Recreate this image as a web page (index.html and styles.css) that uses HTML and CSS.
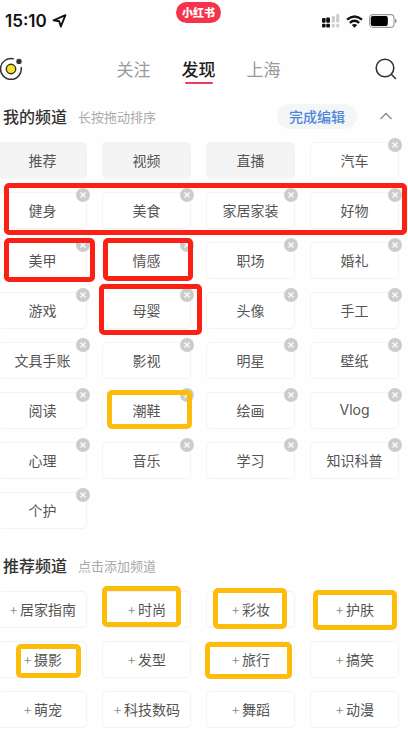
FILE: index.html
```html
<!DOCTYPE html>
<html lang="zh-CN">
<head>
  <meta charset="UTF-8" />
  <meta name="viewport" content="width=device-width, initial-scale=1.0"/>
  <title>我的频道</title>
  <link rel="stylesheet" href="styles.css">
</head>
<body>
<div class="status-bar">
  <div class="clock">
    <span>15:10</span>
    <svg width="15" height="14" viewBox="0 0 15 14"><path d="M13.4 1.2 8.8 12.6 7.2 7.3 1.6 6.3Z" fill="none" stroke="#111" stroke-width="1.9" stroke-linejoin="round"/></svg>
  </div>
  <div class="app-pill">小红书</div>
  <div class="status-icons">
    <svg width="18" height="14" viewBox="0 0 18 14">
      <g fill="#111"><rect x="0" y="4" width="3.6" height="4.7" rx="1"/><rect x="4.2" y="3.4" width="3.8" height="5.3" rx="1"/><rect x="0" y="9.8" width="3.6" height="3.8" rx="1"/><rect x="4.2" y="9.8" width="3.8" height="3.8" rx="1"/></g>
      <g fill="#ccc"><rect x="9.8" y="2" width="3" height="6.5" rx="1"/><rect x="14.2" y="0" width="3" height="8.5" rx="1"/><rect x="9.8" y="10" width="3" height="3.5" rx="1"/><rect x="14.2" y="10" width="3" height="3.5" rx="1"/></g>
    </svg>
    <svg width="17" height="13" viewBox="0 0 17 13">
      <g fill="none" stroke="#111" stroke-width="2.4"><path d="M1 4.7Q8.5-1.7 16 4.7"/><path d="M3.8 7.8Q8.5 3.9 13.2 7.8"/></g>
      <path d="M5.8 10Q8.5 7.9 11.2 10L8.5 12.8Z" fill="#111"/>
    </svg>
    <svg width="28" height="14" viewBox="0 0 28 14">
      <rect x=".6" y=".6" width="24.4" height="12.8" rx="3.4" fill="#fff" stroke="#999" stroke-width="1.1"/>
      <rect x="1.8" y="1.9" width="17" height="10.2" rx="2" fill="#000"/>
      <path d="M26.2 4.8v4.4Q27.6 8.6 27.6 7T26.2 4.8Z" fill="#777"/>
    </svg>
  </div>
</div>

<header class="nav">
  <button class="icon-btn" aria-label="直播">
    <svg width="23" height="24" viewBox="0 0 23 24">
      <path d="M13.2 1.8A10.4 10.4 0 1 0 21.2 10.5" fill="none" stroke="#333" stroke-width="1.5" stroke-linecap="round"/>
      <circle cx="11" cy="12" r="4.7" fill="#f8e71c" stroke="#333" stroke-width="1.4"/>
      <circle cx="19" cy="4.4" r="2.7" fill="#333"/>
    </svg>
  </button>
  <nav class="tabs">
    <a href="#">关注</a>
    <a href="#" class="active">发现</a>
    <a href="#">上海</a>
  </nav>
  <button class="icon-btn search" aria-label="搜索">
    <svg width="22" height="22" viewBox="0 0 22 22"><g fill="none" stroke="#333" stroke-width="1.6" stroke-linecap="round"><circle cx="10" cy="10" r="8.8"/><path d="m16.3 16.3 4.2 4.2"/></g></svg>
  </button>
</header>

<main>
  <section>
    <div class="section-head">
      <h2>我的频道</h2>
      <span class="hint">长按拖动排序</span>
      <button class="edit-btn">完成编辑</button>
      <button class="icon-btn" aria-label="收起">
        <svg width="14" height="8" viewBox="0 0 14 8"><path d="M1.5 7 7 1.5 12.5 7" fill="none" stroke="#888" stroke-width="1.3"/></svg>
      </button>
    </div>
    <div class="channels" id="mine"></div>
  </section>

  <section class="recommend">
    <div class="section-head">
      <h2>推荐频道</h2>
      <span class="hint">点击添加频道</span>
    </div>
    <div class="channels" id="more"></div>
  </section>
</main>

<!-- highlighted channels -->
<div class="mark red row-2"></div>
<div class="mark red nails"></div>
<div class="mark red emotion"></div>
<div class="mark red baby"></div>
<div class="mark yellow shoes"></div>
<div class="mark yellow fashion"></div>
<div class="mark yellow makeup"></div>
<div class="mark yellow skincare"></div>
<div class="mark yellow photo"></div>
<div class="mark yellow travel"></div>

<script src="script.js"></script>
</body>
</html>
```

FILE: styles.css
```css
* { margin: 0; padding: 0; box-sizing: border-box; }
body {
  position: relative; min-height: 100vh; overflow-x: hidden;
  background: #fefefe; color: #333;
  font-family: "Noto Sans CJK SC", sans-serif;
}
button {
  font-family: inherit; border: none; background: none; cursor: pointer;
}
a { color: inherit; text-decoration: none; }
svg { display: block; }

.status-bar, .nav {
  display: grid; grid-template-columns: 1fr auto 1fr;
  align-items: center; padding-right: 11px;
}
.status-bar { height: 42px; }
.clock {
  display: flex; align-items: center; gap: 5px; padding-left: 5px;
  font: 600 17px/20px Inter, sans-serif; color: #111;
}
.app-pill {
  align-self: start; margin-top: 2px; padding: 0 6px;
  border-radius: 11px; background: #f5334c; color: #fff;
  font-size: 11px; font-weight: 900; line-height: 21px;
}
.status-icons {
  display: flex; align-items: center; justify-content: flex-end; gap: 6px;
}

.nav { height: 54px; }
.icon-btn { justify-self: start; }
.icon-btn.search { justify-self: end; }
.tabs {
  display: flex; gap: 31px;
  font-size: 17px; line-height: 30px; color: #999;
}
.tabs .active {
  position: relative; color: #222; font-weight: 500;
}
.tabs .active::after {
  content: ""; position: absolute; left: 3px; right: 3px; bottom: 0;
  height: 2px; border-radius: 1px; background: #f03a5a;
}

.section-head {
  display: flex; align-items: center; height: 42px;
  padding: 0 15px 2px 3px;
}
.section-head h2 { font-size: 16px; font-weight: 500; }
.hint { margin-left: 11px; font-size: 13px; color: #aaa; }
.edit-btn {
  margin-left: auto; margin-right: 22px; padding: 0 12px;
  border-radius: 13px; background: #f4f5f7; color: #4f86d9;
  font-size: 14px; font-weight: 500; line-height: 25px;
}
.recommend { margin-top: 16px; }

.channels {
  display: grid; grid-template-columns: repeat(4, 1fr);
  gap: 13px 15px; margin: 4px 9px 0 -2px;
}
.channel {
  position: relative; height: 37px; padding-bottom: 2px;
  display: flex; align-items: center; justify-content: center;
  border: 1px solid #f3f3f3; border-radius: 5px; background: #fff;
  color: #555; font-family: Inter, "Noto Sans CJK SC", sans-serif;
  font-size: 14px; white-space: nowrap;
}
.channel.fixed { background: #f4f4f4; }
.plus { margin-right: 2px; font-weight: 300; color: #888; }
.remove {
  position: absolute; top: -5px; right: -4px;
  width: 14px; height: 14px; border-radius: 50%; background: #ccc;
}

.mark {
  position: absolute; border: 5px solid; border-radius: 5px;
  pointer-events: none;
}
.red { border-color: #fb2016; }
.yellow { border-color: #fdbb0c; }
.row-2 { left: 4px; top: 183px; width: 403px; height: 52px; }
.nails { left: 4px; top: 238px; width: 91px; height: 44px; }
.emotion { left: 103px; top: 238px; width: 90px; height: 43px; }
.baby { left: 99px; top: 284px; width: 103px; height: 51px; }
.shoes { left: 107px; top: 390px; width: 85px; height: 39px; }
.fashion { left: 102px; top: 586px; width: 79px; height: 41px; }
.makeup { left: 213px; top: 588px; width: 74px; height: 41px; }
.skincare { left: 313px; top: 590px; width: 84px; height: 40px; }
.photo { left: 16px; top: 644px; width: 65px; height: 34px; }
.travel { left: 205px; top: 642px; width: 87px; height: 37px; }
```

FILE: script.js
```js
const fixed = ["推荐", "视频", "直播"];
const mine = [
  "汽车", "健身", "美食", "家居家装", "好物",
  "美甲", "情感", "职场", "婚礼",
  "游戏", "母婴", "头像", "手工",
  "文具手账", "影视", "明星", "壁纸",
  "阅读", "潮鞋", "绘画", "Vlog",
  "心理", "音乐", "学习", "知识科普", "个护"
];
const more = [
  "居家指南", "时尚", "彩妆", "护肤",
  "摄影", "发型", "旅行", "搞笑",
  "萌宠", "科技数码", "舞蹈", "动漫"
];
const cross = '<svg width="14" height="14" viewBox="0 0 14 14"><path d="m4.5 4.5 5 5m0-5-5 5" stroke="#fff" stroke-width="1.3"/></svg>';

document.getElementById("mine").innerHTML =
  fixed.map(name => `<div class="channel fixed">${name}</div>`).join("") +
  mine.map(name => `<div class="channel">${name}<button class="remove" aria-label="删除${name}">${cross}</button></div>`).join("");

document.getElementById("more").innerHTML =
  more.map(name => `<button class="channel"><span class="plus">+</span>${name}</button>`).join("");
```
